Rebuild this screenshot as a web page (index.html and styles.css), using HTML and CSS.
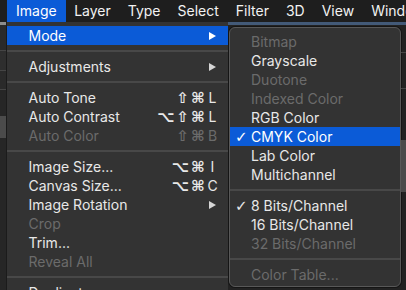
FILE: index.html
```html
<!DOCTYPE html>
<html>

<head>
    <title>Image Menu</title>
    <link rel="stylesheet" href="styles.css">
</head>

<body>
    <div class="menubar">
        <span class="bar-item active">Image</span>
        <span class="bar-item">Layer</span>
        <span class="bar-item">Type</span>
        <span class="bar-item">Select</span>
        <span class="bar-item">Filter</span>
        <span class="bar-item">3D</span>
        <span class="bar-item">View</span>
        <span class="bar-item">Window</span>
    </div>

    <div class="workspace">
        <!-- panels behind the menus, left edge -->
        <div class="side side-left">
            <div class="ls-top"></div>
            <div class="ls-a"></div>
            <div class="line"></div>
            <div class="ls-b"></div>
            <div class="line"></div>
            <div class="ls-c"></div>
            <div class="line"></div>
            <div class="ls-d"></div>
            <div class="ls-block"></div>
        </div>

        <div class="menu main-menu">
            <div class="item active">
                <span class="label">Mode</span>
                <span class="arrow"><svg width="7" height="8" viewBox="0 0 7 8"><polygon points="0,0 7,4 0,8" fill="#ffffff"/></svg></span>
            </div>
            <div class="sep"></div>
            <div class="item">
                <span class="label">Adjustments</span>
                <span class="arrow"><svg width="7" height="8" viewBox="0 0 7 8"><polygon points="0,0 7,4 0,8" fill="#d6d6d6"/></svg></span>
            </div>
            <div class="sep"></div>
            <div class="item">
                <span class="label">Auto Tone</span>
                <span class="mods">⇧⌘</span><span class="key">L</span>
            </div>
            <div class="item">
                <span class="label">Auto Contrast</span>
                <span class="mods">⌥⇧⌘</span><span class="key">L</span>
            </div>
            <div class="item disabled">
                <span class="label">Auto Color</span>
                <span class="mods">⇧⌘</span><span class="key">B</span>
            </div>
            <div class="sep"></div>
            <div class="item">
                <span class="label">Image Size...</span>
                <span class="mods">⌥⌘</span><span class="key">I</span>
            </div>
            <div class="item">
                <span class="label">Canvas Size...</span>
                <span class="mods">⌥⌘</span><span class="key">C</span>
            </div>
            <div class="item">
                <span class="label">Image Rotation</span>
                <span class="arrow"><svg width="7" height="8" viewBox="0 0 7 8"><polygon points="0,0 7,4 0,8" fill="#d6d6d6"/></svg></span>
            </div>
            <div class="item disabled"><span class="label">Crop</span></div>
            <div class="item"><span class="label">Trim...</span></div>
            <div class="item disabled"><span class="label">Reveal All</span></div>
            <div class="sep"></div>
            <div class="item"><span class="label">Duplicate...</span></div>
        </div>

        <div class="sub-area">
            <div class="menu submenu">
                <div class="item disabled"><span class="check"></span><span class="label">Bitmap</span></div>
                <div class="item"><span class="check"></span><span class="label">Grayscale</span></div>
                <div class="item disabled"><span class="check"></span><span class="label">Duotone</span></div>
                <div class="item disabled"><span class="check"></span><span class="label">Indexed Color</span></div>
                <div class="item"><span class="check"></span><span class="label">RGB Color</span></div>
                <div class="item active"><span class="check">✓</span><span class="label">CMYK Color</span></div>
                <div class="item"><span class="check"></span><span class="label">Lab Color</span></div>
                <div class="item"><span class="check"></span><span class="label">Multichannel</span></div>
                <div class="sep"></div>
                <div class="item"><span class="check">✓</span><span class="label">8 Bits/Channel</span></div>
                <div class="item"><span class="check"></span><span class="label">16 Bits/Channel</span></div>
                <div class="item disabled"><span class="check"></span><span class="label">32 Bits/Channel</span></div>
                <div class="sep"></div>
                <div class="item disabled"><span class="check"></span><span class="label">Color Table...</span></div>
            </div>

            <!-- panels behind the menus, right edge -->
            <div class="side side-right">
                <div class="rs-a"></div>
                <div class="line"></div>
                <div class="rs-b"></div>
                <div class="line"></div>
                <div class="rs-c"></div>
                <div class="rs-block"></div>
            </div>
        </div>
    </div>
</body>

</html>
```

FILE: styles.css
```css
body {
    margin: 0;
    width: 406px;
    height: 290px;
    overflow: hidden;
    background-color: #262626;
    font-family: Inter, "DejaVu Sans", sans-serif;
    color: #e8e8e8;
}

.menubar {
    display: flex;
    height: 22px;
    padding-left: 7px;
    background-color: #1e1e1e;
    font-size: 14px;
    white-space: nowrap;
}

.bar-item {
    padding: 0 8.5px;
    line-height: 22px;
    color: #f2f2f2;
}

.bar-item.active {
    padding: 0 9px;
    background-color: #0b5bd7;
    color: #ffffff;
}

.workspace {
    display: flex;
    height: 268px;
}

/* background panels */
.side {
    display: flex;
    flex-direction: column;
}

.side-left {
    width: 6px;
    background-color: #262626;
}

.side .line {
    height: 1px;
    background-color: #454545;
}

.ls-top {
    height: 3px;
    background-color: #8c8c8c;
}

.ls-a {
    height: 25px;
    background-color: #2a2a2a;
}

.ls-b {
    height: 19px;
    background-color: #2e2e2e;
}

.ls-c {
    height: 18px;
    background-color: #2a2a2a;
}

.ls-d {
    height: 26px;
}

.ls-block {
    height: 22px;
    background-color: #4b4b4b;
}

.side-right {
    flex: 1;
    align-self: stretch;
}

.rs-a {
    height: 27px;
}

.rs-b {
    height: 35px;
}

.rs-c {
    height: 51px;
}

.rs-block {
    height: 52px;
    background-color: #4a4a4a;
}

/* menus */
.menu {
    background-color: #333333;
    font-size: 14px;
}

.main-menu {
    width: 221px;
    border-left: 1px solid #1b1b1b;
    padding-top: 4px;
}

.sub-area {
    flex: 1;
    display: flex;
    align-items: flex-start;
    border-top: 3px solid #435a78;
    background-color: #222222;
}

.submenu {
    width: 170px;
    margin: 2px 0 0 1px;
    padding: 4px 0 2px;
    border: 1px solid #585858;
    border-radius: 6px;
    box-shadow: 0 0 0 1px #151515;
    overflow: hidden;
}

.item {
    display: flex;
    align-items: center;
    height: 19px;
    padding: 0 10px 0 21.5px;
    white-space: nowrap;
}

.submenu .item {
    padding-left: 5px;
}

.item.active {
    background-color: #0b5bd7;
    color: #ffffff;
}

.item.disabled {
    color: #6b6b6b;
}

.label {
    flex: 1;
}

.check {
    width: 16px;
    font-family: "DejaVu Sans", sans-serif;
    font-size: 15px;
}

.mods {
    font-family: "DejaVu Sans", sans-serif;
    font-size: 15px;
    font-weight: bold;
    letter-spacing: 2px;
}

.key {
    width: 11px;
    text-align: center;
}

.arrow {
    width: 11px;
    display: flex;
    justify-content: center;
}

.sep {
    height: 12px;
    display: flex;
    align-items: center;
}

.sep::before {
    content: "";
    flex: 1;
    height: 2px;
    background-color: #484848;
}
```
